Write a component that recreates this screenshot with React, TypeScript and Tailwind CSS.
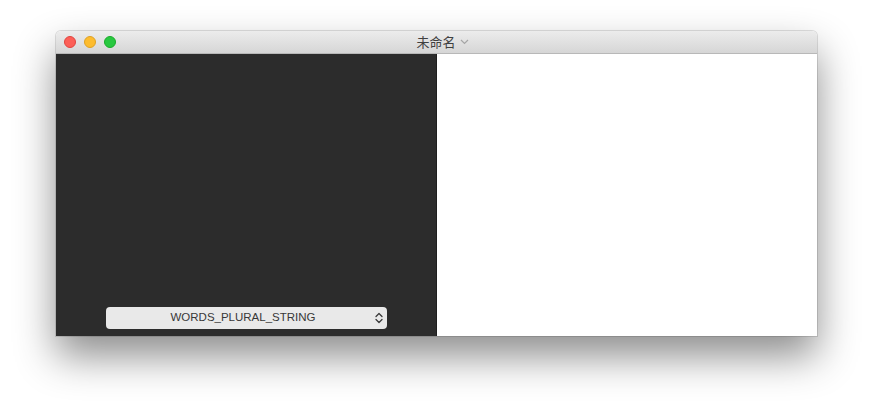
import React from 'react';

const TrafficLight = ({ fill, ring }: { fill: string; ring: string }) => (
  <span className={`block w-[12px] h-[12px] rounded-full border ${fill} ${ring}`} />
);

export default function App() {
  return (
    <div className="min-h-[416px] w-[873px] bg-white pt-[31px] pl-[56px]" style={{ fontFamily: '"Liberation Sans", "Noto Sans CJK SC", sans-serif' }}>
      <div className="w-[761px] h-[305px] flex flex-col rounded-t-[5px] overflow-hidden shadow-[0_20px_40px_rgba(0,0,0,0.45),0_0_0_1px_rgba(0,0,0,0.12)]">
        {/* Title bar */}
        <div className="relative h-[23px] shrink-0 flex items-center justify-center bg-gradient-to-b from-[#ececec] to-[#d6d6d6] border-b border-[#b8b8b8]">
          <div className="absolute left-[8px] top-[5px] flex gap-[8px]">
            <TrafficLight fill="bg-[#fc5f57]" ring="border-[#e0443e]" />
            <TrafficLight fill="bg-[#fdbc2e]" ring="border-[#dea123]" />
            <TrafficLight fill="bg-[#28c840]" ring="border-[#1aab29]" />
          </div>
          <div className="flex items-center gap-[4px] pl-[12px] text-[13px] text-[#404040] leading-none">
            <span>未命名</span>
            <svg width="9" height="6" viewBox="0 0 9 6" fill="none">
              <path d="M1 1l3.5 3.5L8 1" stroke="#a6a6a6" strokeWidth="1.2" />
            </svg>
          </div>
        </div>

        {/* Content */}
        <div className="flex flex-1">
          <div className="w-[380px] bg-[#2c2c2c] flex flex-col justify-end items-center pb-[7px]">
            <div className="relative w-[281px] h-[22px] rounded-[4px] bg-[#e9e9e9] flex items-center justify-center pr-[6px] text-[11.5px] text-[#383838]">
              <span>WORDS_PLURAL_STRING</span>
              <svg className="absolute right-[4px] top-[5px]" width="8" height="12" viewBox="0 0 8 12" fill="none">
                <path d="M1 4.5L4 1.5l3 3M1 7.5l3 3 3-3" stroke="#3a3a3a" strokeWidth="1.3" strokeLinecap="round" strokeLinejoin="round" />
              </svg>
            </div>
          </div>
          <div className="w-px bg-[#1e1e1e]" />
          <div className="flex-1 bg-white" />
        </div>
      </div>
    </div>
  );
}
